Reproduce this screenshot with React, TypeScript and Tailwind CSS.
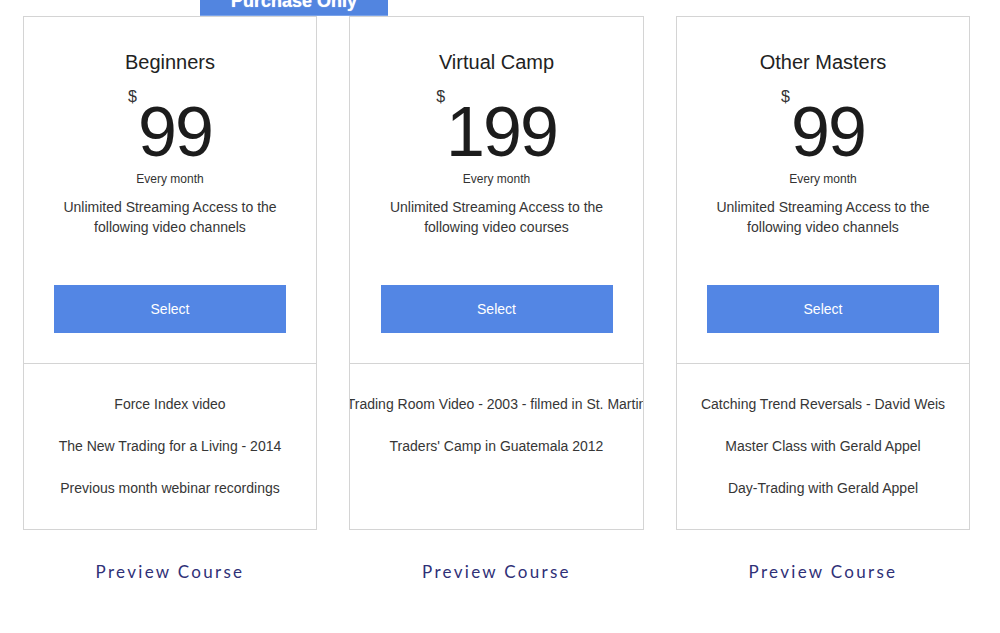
import React from 'react'

interface Plan {
  name: string
  price: string
  description: string[]
  features: string[]
  width: string
}

const PLANS: Plan[] = [
  {
    name: 'Beginners',
    price: '99',
    description: ['Unlimited Streaming Access to the', 'following video channels'],
    features: ['Force Index video', 'The New Trading for a Living - 2014', 'Previous month webinar recordings'],
    width: 'w-[294px]',
  },
  {
    name: 'Virtual Camp',
    price: '199',
    description: ['Unlimited Streaming Access to the', 'following video courses'],
    features: ['Trading Room Video - 2003 - filmed in St. Martin', "Traders' Camp in Guatemala 2012"],
    width: 'w-[295px]',
  },
  {
    name: 'Other Masters',
    price: '99',
    description: ['Unlimited Streaming Access to the', 'following video channels'],
    features: ['Catching Trend Reversals - David Weis', 'Master Class with Gerald Appel', 'Day-Trading with Gerald Appel'],
    width: 'w-[294px]',
  },
]

function PlanCard({ plan }: { plan: Plan }) {
  return (
    <div className={`flex flex-col ${plan.width}`}>
      <div className="flex flex-1 flex-col overflow-hidden border border-[#d4d4d4] bg-white">
        {/* Top: name, price, select */}
        <div className="flex h-[347px] flex-col items-center border-b border-[#d4d4d4] pt-[33px] pb-[30px]">
          <h3 className="text-[20px] leading-[24px] text-[#222]">{plan.name}</h3>
          <div className="mt-[23px] flex items-start">
            <span className="-mt-[8px] mr-[1px] text-[16px] leading-none text-[#333]">$</span>
            <span className="text-[70px] leading-none tracking-[-2px] text-[#1c1c1c]">{plan.price}</span>
          </div>
          <p className="mt-[4px] text-[12px] leading-[16px] text-[#333]">Every month</p>
          <div className="mt-[10px] text-center text-[14px] leading-[20px] text-[#363636]">
            {plan.description.map(line => (
              <p key={line}>{line}</p>
            ))}
          </div>
          <button className="mt-auto h-[48px] w-[232px] bg-[#5386e4] text-[14px] text-white">
            Select
          </button>
        </div>

        {/* Features */}
        <div className="flex flex-1 flex-col gap-[22px] pt-[30px] pb-[31px]">
          {plan.features.map(f => (
            <div
              key={f}
              className="flex justify-center whitespace-nowrap text-[14px] leading-[20px] text-[#363636]"
            >
              <span>{f}</span>
            </div>
          ))}
        </div>
      </div>

      <a
        href="#"
        className="mt-[30px] text-center text-[17px] leading-[24px] tracking-[2.3px] text-[#2f3077]"
        style={{ fontFamily: 'Lato, "Liberation Sans", sans-serif' }}
      >
        Preview Course
      </a>
    </div>
  )
}

export default function App() {
  return (
    <div
      className="relative h-[633px] w-[1000px] overflow-hidden bg-white"
      style={{ fontFamily: '"Liberation Sans", Arial, sans-serif' }}
    >
      {/* Purchase Only banner */}
      <div className="absolute left-[200px] top-0 z-10 h-[16px] w-[188px] overflow-hidden border-b border-[#7aa3ea] bg-[#5285e0]">
        <div className="-mt-[8px] text-center text-[18px] font-bold leading-[18px] text-white [text-shadow:0_0_1px_#dbe7ff]">
          Purchase Only
        </div>
      </div>

      <div className="flex items-stretch gap-[32px] pl-[23px] pt-[16px]">
        {PLANS.map(plan => (
          <PlanCard key={plan.name} plan={plan} />
        ))}
      </div>
    </div>
  )
}
